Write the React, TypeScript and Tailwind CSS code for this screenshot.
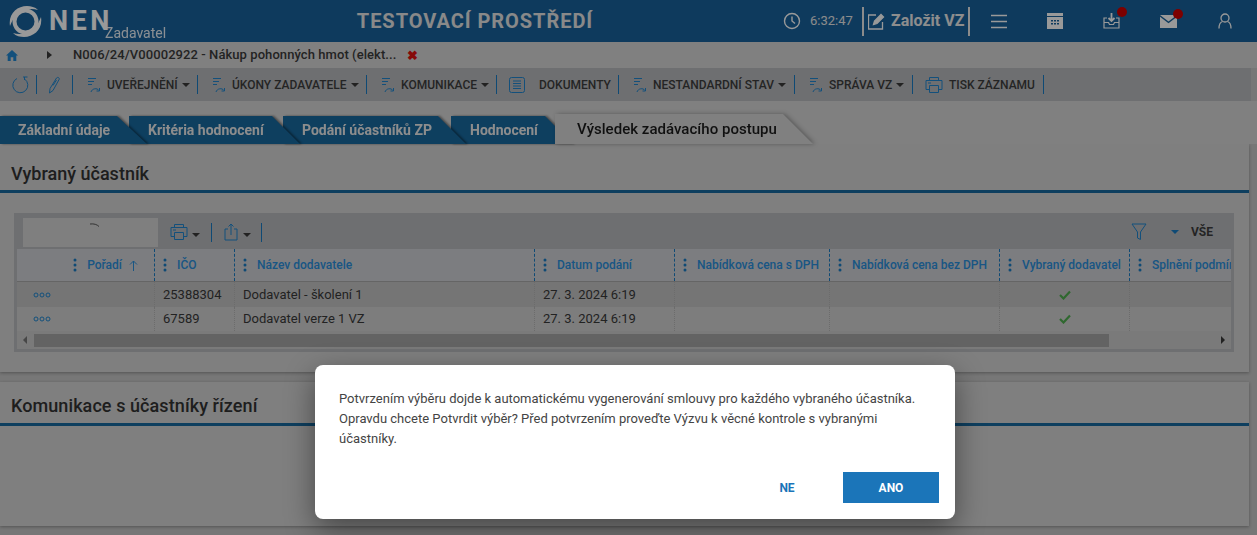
import type { ReactNode } from "react";

const Divider = () => <span className="w-px h-[19px] bg-[#197cc3] shrink-0" />;

const Caret = () => <span className="inline-block ml-[4px] w-0 h-0 border-x-[4px] border-x-transparent border-t-[4px] border-t-[#3a3a3a]" />;

const FlowIcon = () => (
  <svg width="16" height="18" viewBox="0 0 16 18" fill="none" stroke="#2086cf" strokeWidth="1" className="shrink-0">
    <path d="M1 2.5h8M1 5.5h6M1 8.5h4" />
    <path d="M4 16c1-3.5 6-4.5 8-1.5M12.5 12v3h-3" />
  </svg>
);

const PrintIcon = () => (
  <svg width="18" height="18" viewBox="0 0 18 18" fill="none" stroke="#2086cf" strokeWidth="1" className="shrink-0">
    <path d="M4.500 4.500v-3h9v3" />
    <path d="M4.500 13.500h-3.500v-9h16v9h-3.500" />
    <path d="M4.500 9.500h9v7h-9zM3 7h3" />
  </svg>
);

const ToolItem = ({ label, width, caret = true }: { label: string; width: string; caret?: boolean }) => (
  <div className={`flex items-center pl-[14px] ${width}`}>
    <FlowIcon />
    <span className="ml-[4px] whitespace-nowrap">{label}</span>
    {caret && <Caret />}
  </div>
);

const Tab = ({ label, className, shape, text }: { label: string; className: string; shape: string; text: string }) => (
  <div className={`relative h-[28px] [filter:drop-shadow(2px_0_1px_rgba(0,0,0,0.45))] ${className}`}>
    <div className={`h-full bg-[#18699f] text-[#ebebeb] text-[14px] font-bold leading-[29px] whitespace-nowrap ${shape} ${text}`}>{label}</div>
  </div>
);

const Col = ({ label, first }: { label: string; first?: boolean }) => (
  <div className={`flex items-center h-full overflow-hidden whitespace-nowrap text-[#2b8fdc] text-[12px] font-medium ${first ? "justify-end pr-[16px]" : "border-l border-dashed border-[#197cc3] pl-[8px]"}`}>
    <svg width="4" height="14" viewBox="0 0 4 14" fill="#197cc3" className="shrink-0">
      <circle cx="2" cy="2" r="1.5" />
      <circle cx="2" cy="7" r="1.5" />
      <circle cx="2" cy="12" r="1.5" />
    </svg>
    <span className="ml-[10px]">{label}</span>
    {first && (
      <svg width="9" height="11" viewBox="0 0 9 11" fill="none" stroke="#2b8fdc" strokeWidth="1" className="ml-[7px] shrink-0">
        <path d="M4.500 11V1M1 4.500L4.500 1 8 4.500" />
      </svg>
    )}
  </div>
);

const Dots = () => (
  <svg width="18" height="6" viewBox="0 0 18 6" fill="none" stroke="#2086cf" strokeWidth="1">
    <circle cx="3" cy="3" r="2" />
    <circle cx="9" cy="3" r="2" />
    <circle cx="15" cy="3" r="2" />
  </svg>
);

const Check = () => (
  <svg width="12" height="10" viewBox="0 0 12 10" fill="none" stroke="#4fae4f" strokeWidth="2.2">
    <path d="M1 5l3.5 3.5L11 1.5" />
  </svg>
);

const Row = ({ ico, name, className }: { ico: string; name: string; className: string }) => {
  const cell = "h-full border-l border-dotted border-[#b4b4b4] flex items-center";
  return (
    <div className={`grid grid-cols-[137px_80px_300px_140px_155px_170px_130px_102px] items-center text-[13px] text-[#393939] ${className}`}>
      <div className="pl-[16px] flex items-center h-full"><Dots /></div>
      <div className={`${cell} pl-[8px]`}>{ico}</div>
      <div className={`${cell} pl-[8px]`}>{name}</div>
      <div className={`${cell} pl-[8px]`}>27. 3. 2024 6:19</div>
      <div className={cell} />
      <div className={cell} />
      <div className={`${cell} justify-center`}><Check /></div>
      <div className={cell} />
    </div>
  );
};

const HeadIcon = ({ children, badge }: { children: ReactNode; badge?: boolean }) => (
  <div className="relative w-[56.5px] flex justify-center">
    {children}
    {badge && <span className="absolute top-[-6px] right-[13px] w-[10px] h-[10px] rounded-full bg-[#d00000]" />}
  </div>
);

export default function App() {
  return (
    <div className="relative w-[1257px] h-[535px] overflow-hidden bg-[#c6c6c6] font-['Roboto',sans-serif]">
      <header className="h-[42px] bg-[#18629c] text-white flex items-center">
        <div className="flex items-center w-[271px] pl-[9px] relative h-full">
          <svg width="33" height="33" viewBox="0 0 33 33" className="shrink-0">
            <circle cx="16.5" cy="16.5" r="11" fill="none" stroke="#fff" strokeWidth="4" />
            <path d="M1 21C-1 9 8 1 18 1c4 0 8 1 11 4-6-2-14-1-19 3C5 12 3 16 1 21z" fill="#fff" />
            <path d="M32 12c2 12-7 20-17 20-4 0-8-1-11-4 6 2 14 1 19-3 5-4 7-8 9-13z" fill="#fff" />
          </svg>
          <span className="ml-[7px] text-[27px] font-bold tracking-[3.5px] leading-none">NEN</span>
          <span className="absolute left-[105px] top-[24px] text-[14px] leading-[18px] opacity-90">Zadavatel</span>
        </div>
        <div className="w-[408px] text-center text-[20px] font-bold tracking-[0.95px] text-[#e4e4e4]">TESTOVACÍ PROSTŘEDÍ</div>
        <div className="ml-[104px] flex items-center h-full">
          <svg width="18" height="18" viewBox="0 0 18 18" fill="none" stroke="#fff" strokeWidth="1.4">
            <circle cx="9" cy="9" r="7.5" />
            <path d="M9 4.5V9l3 2.5" />
          </svg>
          <span className="ml-[9px] w-[52px] text-[13px] text-[#e8e8e8]">6:32:47</span>
          <span className="w-[2px] h-[29px] bg-[#e8e8e8]" />
          <svg width="17" height="17" viewBox="0 0 17 17" fill="none" stroke="#fff" strokeWidth="1.3" className="ml-[4px]">
            <path d="M14.5 9v7h-14V2H8" />
            <path d="M5.5 11.5l1-3.5L13 1.5l2.5 2.5L9 10.5z" fill="#fff" />
          </svg>
          <span className="ml-[6px] text-[16px] font-bold whitespace-nowrap text-[#ebebeb]">Založit VZ</span>
          <span className="ml-[4px] w-[2px] h-[29px] bg-[#e8e8e8]" />
          <div className="flex items-center">
            <HeadIcon>
              <svg width="18" height="15" viewBox="0 0 18 15" fill="none" stroke="#fff" strokeWidth="1.3">
                <path d="M1 1.5h16M1 7.5h16M1 13.5h16" />
              </svg>
            </HeadIcon>
            <HeadIcon>
              <svg width="16" height="16" viewBox="0 0 16 16" fill="#fff">
                <path d="M0 0h16v3H0zM0 4h16v12H0z" />
                <path d="M4 7h2v1.5H4zM7 7h2v1.5H7zM10 7h2v1.5h-2zM4 10h2v1.5H4zM7 10h2v1.5H7zM10 10h2v1.5h-2z" fill="#18629c" />
              </svg>
            </HeadIcon>
            <HeadIcon badge>
              <svg width="17" height="16" viewBox="0 0 17 16" fill="none" stroke="#fff" strokeWidth="1.2">
                <path d="M4 5H1v10h15V5h-3M1 9.5h4.500l1 2h4l1-2H16" />
                <path d="M8.500 0v8M5.500 5l3 3 3-3" strokeWidth="1.8" />
              </svg>
            </HeadIcon>
            <HeadIcon badge>
              <svg width="17" height="13" viewBox="0 0 17 13" fill="#fff">
                <path d="M0 0h17L8.500 6.500zM0 1.800l8.500 6.500L17 1.800V13H0z" />
              </svg>
            </HeadIcon>
            <HeadIcon>
              <svg width="14" height="16" viewBox="0 0 14 16" fill="none" stroke="#fff" strokeWidth="1.3">
                <circle cx="7" cy="5" r="4" />
                <path d="M1 15.500c0-4 2-6.500 3.500-7M13 15.500c0-4-2-6.500-3.500-7" />
              </svg>
            </HeadIcon>
          </div>
        </div>
      </header>

      <div className="h-[26px] bg-[#d5d5d5] flex items-center text-[13px] font-medium text-[#3b3b3b]">
        <svg width="12" height="11" viewBox="0 0 12 11" fill="#2086cf" className="ml-[6px] shrink-0">
          <path d="M6 0l6 5.500h-1.700V11H7.300V7.300H4.700V11H1.700V5.500H0z" />
        </svg>
        <span className="ml-[29px] w-0 h-0 border-y-[4px] border-y-transparent border-l-[5px] border-l-[#3a3a3a]" />
        <span className="ml-[21px] whitespace-nowrap tracking-[0.07px]">N006/24/V00002922 - Nákup pohonných hmot (elekt...</span>
        <span className="ml-[11px] text-[#e01010] text-[13px] font-bold leading-none">✖</span>
      </div>

      <div className="h-[33px] mr-[6px] bg-[#b7b9bc] flex items-center text-[12px] font-medium text-[#3d3d3d]">
        <div className="w-[36px] flex justify-center pl-[4px]">
          <svg width="18" height="18" viewBox="0 0 18 18" fill="none" stroke="#2086cf" strokeWidth="1">
            <path d="M6 2.500A7.500 7.500 0 1 0 13.500 3M12 1h4.500M13.500 1v3" />
          </svg>
        </div>
        <Divider />
        <div className="w-[35px] flex justify-center">
          <svg width="13" height="18" viewBox="0 0 13 18" fill="none" stroke="#2086cf" strokeWidth="1">
            <path d="M2 12.500L8.500 2c1-1.300 3.300-.3 2.700 1.300L5 14.500 1.500 17z" />
            <path d="M5 9.500L8.500 4" />
          </svg>
        </div>
        <Divider />
        <ToolItem label="UVEŘEJNĚNÍ" width="w-[124px]" />
        <Divider />
        <ToolItem label="ÚKONY ZADAVATELE" width="w-[168px]" />
        <Divider />
        <ToolItem label="KOMUNIKACE" width="w-[129px]" />
        <Divider />
        <div className="w-[121px] flex items-center pl-[12px]">
          <svg width="16" height="16" viewBox="0 0 16 16" fill="none" stroke="#2086cf" strokeWidth="1">
            <rect x="0.500" y="0.500" width="15" height="15" rx="2" />
            <path d="M4 4h8M4 6.500h8M4 9h8M4 11.500h8" />
          </svg>
          <span className="ml-[14px]">DOKUMENTY</span>
        </div>
        <Divider />
        <ToolItem label="NESTANDARDNÍ STAV" width="w-[175px]" />
        <Divider />
        <ToolItem label="SPRÁVA VZ" width="w-[117px]" />
        <Divider />
        <div className="w-[130px] flex items-center pl-[12px]">
          <PrintIcon />
          <span className="ml-[6px] whitespace-nowrap">TISK ZÁZNAMU</span>
        </div>
        <Divider />
      </div>

      <div className="h-[43px] bg-[#d5d5d5] flex items-end isolate">
        <Tab label="Základní údaje" className="w-[147px] z-40" shape="[clip-path:polygon(0_0,117px_0,147px_100%,0_100%)]" text="pl-[18px]" />
        <Tab label="Kritéria hodnocení" className="w-[171px] -ml-[18px] z-30" shape="[clip-path:polygon(0_0,143px_0,171px_100%,0_100%)]" text="pl-[19px]" />
        <Tab label="Podání účastníků ZP" className="w-[183px] -ml-[17px] z-20" shape="[clip-path:polygon(0_0,155px_0,183px_100%,0_100%)]" text="pl-[19px]" />
        <Tab label="Hodnocení" className="w-[122px] -ml-[15px] z-10" shape="[clip-path:polygon(0_0,94px_0,122px_100%,0_100%)]" text="pl-[19px]" />
        <div className="relative z-50 -ml-[18px] w-[258px] h-[30px] [filter:drop-shadow(2px_0_2px_rgba(0,0,0,0.3))]">
          <div className="h-full bg-[#d5d5d5] text-[15px] font-medium text-[#1c1c1c] leading-[30px] pl-[22px] tracking-[0.03px] whitespace-nowrap [clip-path:polygon(0_0,228px_0,258px_100%,0_100%)]">Výsledek zadávacího postupu</div>
        </div>
      </div>

      <section className="h-[228px] mr-[8px] bg-[#d4d4d4] shadow-[0_1px_3px_rgba(0,0,0,0.3)] pt-[18px]">
        <h2 className="px-[11px] h-[28px] text-[18px] font-medium leading-[24px] text-[#333]">Vybraný účastník</h2>
        <div className="h-[3px] bg-[#18699f]" />
        <div className="mt-[20px] ml-[14px] w-[1220px] h-[139px] bg-[#b7b9bc] px-[3px]">
          <div className="h-[36px] pt-[2px] flex items-center">
            <div className="relative ml-[6px] w-[135px] h-[29px] bg-[#d4d4d4]">
              <svg width="12" height="5" viewBox="0 0 12 5" fill="none" stroke="#555" strokeWidth="1" className="absolute left-[66px] top-[5px]">
                <path d="M1 1c4-.5 7 .5 9 2.500" />
              </svg>
            </div>
            <div className="ml-[12px] flex items-center">
              <PrintIcon />
              <span className="mr-[11px]"><Caret /></span>
              <Divider />
              <svg width="14" height="18" viewBox="0 0 14 18" fill="none" stroke="#2086cf" strokeWidth="1" className="ml-[12px]">
                <path d="M4 6H1v11h12V6h-3M7 12V1M4.500 3.500L7 1l2.500 2.500" />
              </svg>
              <span className="ml-[1px] mr-[10px]"><Caret /></span>
              <Divider />
            </div>
            <div className="ml-auto flex items-center mr-[18px] text-[12px] font-bold text-[#3d3d3d]">
              <svg width="16" height="18" viewBox="0 0 16 18" fill="none" stroke="#2086cf" strokeWidth="1">
                <path d="M1 1h14L9.500 9v7.500l-3-1.500V9z" />
              </svg>
              <span className="ml-[8px]"><Divider /></span>
              <span className="ml-[16px] w-0 h-0 border-x-[4px] border-x-transparent border-t-[4px] border-t-[#197cc3]" />
              <span className="ml-[12px]">VŠE</span>
            </div>
          </div>
          <div className="h-[33px] bg-[#cfd0d5] border-b border-[#a8a8a8] grid grid-cols-[137px_80px_300px_140px_155px_170px_130px_102px]">
            <Col first label="Pořadí" />
            <Col label="IČO" />
            <Col label="Název dodavatele" />
            <Col label="Datum podání" />
            <Col label="Nabídková cena s DPH" />
            <Col label="Nabídková cena bez DPH" />
            <Col label="Vybraný dodavatel" />
            <Col label="Splnění podmínek" />
          </div>
          <Row ico="25388304" name="Dodavatel - školení 1" className="h-[25px] bg-[#c4c4c4]" />
          <Row ico="67589" name="Dodavatel verze 1 VZ" className="h-[24px] bg-[#d0d0d0]" />
          <div className="h-[18px] bg-[#cccccc] flex items-center">
            <span className="ml-[6px] w-0 h-0 border-y-[4px] border-y-transparent border-r-[4px] border-r-[#777]" />
            <div className="ml-[7px] w-[1075px] h-[13px] bg-[#a5a5a5]" />
            <span className="ml-auto mr-[6px] w-0 h-0 border-y-[4px] border-y-transparent border-l-[4px] border-l-[#3a3a3a]" />
          </div>
        </div>
      </section>

      <section className="mt-[10px] h-[144px] mr-[8px] bg-[#d4d4d4] shadow-[0_1px_3px_rgba(0,0,0,0.3)] pt-[12px]">
        <h2 className="px-[11px] h-[29px] text-[18px] font-medium leading-[24px] tracking-[0.08px] text-[#333]">Komunikace s účastníky řízení</h2>
        <div className="h-[3px] bg-[#18699f]" />
      </section>

      <div className="absolute inset-0 bg-black/40" />

      <div className="absolute left-[315px] top-[365px] w-[640px] h-[154px] bg-white rounded-[8px] shadow-[0_10px_30px_rgba(0,0,0,0.45)] px-[24px] pt-[24px]">
        <p className="w-[590px] text-[13px] leading-[20px] text-[#444]">
          Potvrzením výběru dojde k automatickému vygenerování smlouvy pro každého vybraného účastníka. Opravdu chcete Potvrdit výběr? Před potvrzením proveďte Výzvu k věcné kontrole s vybranými účastníky.
        </p>
        <div className="absolute right-[16px] bottom-[16px] flex items-center text-[12px] font-bold">
          <button className="w-[96px] h-[31px] text-[#1b75b9]">NE</button>
          <button className="ml-[8px] w-[96px] h-[31px] bg-[#1b75b9] text-white">ANO</button>
        </div>
      </div>
    </div>
  );
}
